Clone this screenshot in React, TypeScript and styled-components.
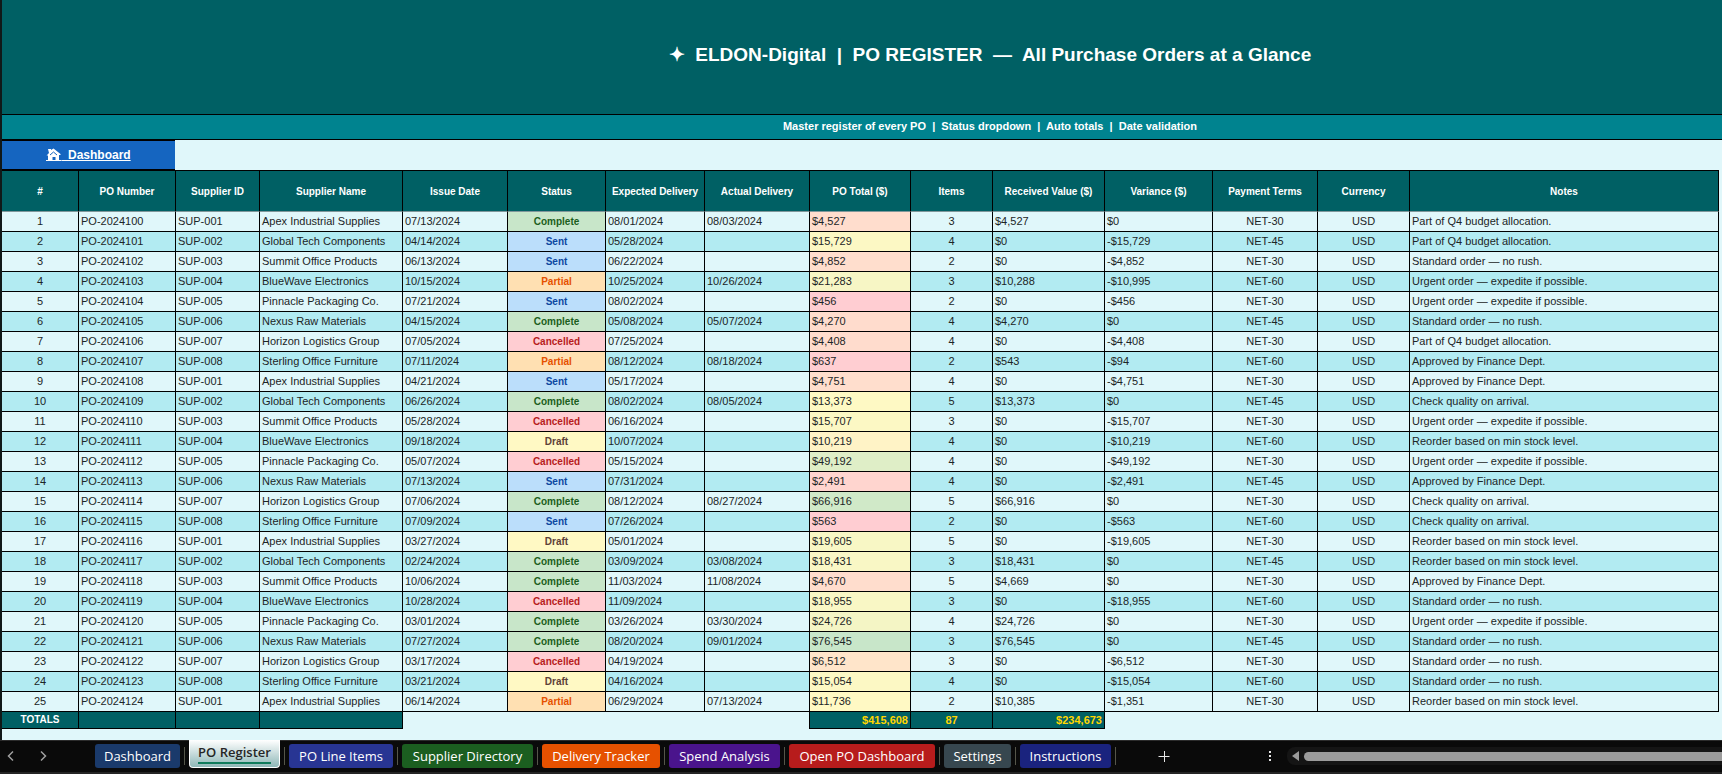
import React from "react";
import styled, { createGlobalStyle } from "styled-components";

const Global = createGlobalStyle`
  *, *::before, *::after { box-sizing: border-box; }
  body {
    margin: 0;
    background: #0a0a0a;
    font-family: "Liberation Sans", Arial, sans-serif;
  }
`;

const ink = "#000";
const teal = "#006064";

const Workbook = styled.div`
  display: flex;
  flex-direction: column;
  min-height: 100vh;
  overflow: hidden;
`;

const Sheet = styled.main`
  flex: 1;
  background: #e0f7fa;
  border-left: 2px solid #101818;
  overflow: hidden;
`;

const Banner = styled.header`
  background: ${teal};
  color: #fff;
  border-bottom: 1px solid ${ink};
  height: 115px;
  padding: 0 0 4px 256px;
  display: flex;
  align-items: center;
  justify-content: center;
`;

const Title = styled.h1`
  margin: 0;
  font-size: 19px;
  line-height: 24px;
  font-weight: 700;
  white-space: pre;
`;

const Subtitle = styled.p`
  margin: 0;
  background: #00838f;
  color: #fff;
  border-bottom: 1px solid ${ink};
  height: 25px;
  padding-left: 256px;
  font-size: 11px;
  line-height: 23px;
  font-weight: 700;
  text-align: center;
  white-space: pre;
`;

const LinkRow = styled.nav`
  display: flex;
  height: 31px;
  margin-right: 3px;
  border-bottom: 1px solid ${ink};
`;

const HomeLink = styled.a`
  width: 173px;
  background: #1565c0;
  border-top: 1px solid ${ink};
  border-bottom: 1px solid ${ink};
  color: #fff;
  display: flex;
  align-items: center;
  justify-content: center;
  font-size: 12px;
  font-weight: 700;
  white-space: pre;
`;

const Grid = styled.table`
  width: calc(100% - 3px);
  table-layout: fixed;
  border-collapse: separate;
  border-spacing: 0;
  font-size: 11px;
  color: #1c2526;
`;

const Col = styled.col<{ $w?: number }>`
  width: ${(p) => (p.$w ? `${p.$w}px` : "auto")};
`;

const Head = styled.th`
  height: 41px;
  padding: 0;
  background: ${teal};
  color: #fff;
  border-right: 1px solid ${ink};
  border-bottom: 1px solid #80979a;
  font-size: 10px;
  font-weight: 700;
  text-align: center;
  white-space: nowrap;
`;

const Row = styled.tr`
  background: #e0f7fa;
  &:nth-child(even) { background: #b2ebf2; }
`;

const Cell = styled.td<{ $align?: string; $fill?: string }>`
  height: 20px;
  padding: 0 2px;
  line-height: 19px;
  border-right: 1px solid ${ink};
  border-bottom: 1px solid ${ink};
  text-align: ${(p) => p.$align ?? "left"};
  background: ${(p) => p.$fill ?? "transparent"};
  white-space: nowrap;
`;

const StatusCell = styled(Cell)<{ $ink: string }>`
  color: ${(p) => p.$ink};
  font-size: 10px;
  font-weight: 700;
`;

const TotalCell = styled.td<{ $align?: string; $gold?: boolean }>`
  height: 17px;
  padding: 0 2px;
  line-height: 16px;
  background: ${teal};
  border-right: 1px solid ${ink};
  border-bottom: 1px solid ${ink};
  color: ${(p) => (p.$gold ? "#ffd600" : "#fff")};
  font-size: ${(p) => (p.$gold ? 11 : 10)}px;
  font-weight: 700;
  text-align: ${(p) => p.$align ?? "center"};
`;

const BlankCell = styled.td<{ $edge?: boolean }>`
  padding: 0;
  border-right: ${(p) => (p.$edge ? `1px solid ${ink}` : "0")};
`;

const TabBar = styled.footer`
  display: flex;
  align-items: flex-start;
  height: 34px;
  background: #0a0a0a;
  border-top: 1px solid #2c2c2c;
  font-family: "Open Sans", "Segoe UI", sans-serif;
  box-shadow: inset 0 -2px 0 #242424;
`;

const Arrows = styled.div`
  display: flex;
  flex: none;
  width: 95px;
  padding: 8px 0 0 3px;
  gap: 19px;
`;

const IconButton = styled.button`
  border: 0;
  padding: 0;
  height: 14px;
  width: 14px;
  background: none;
  color: #a0a0a0;
  flex: none;
  svg { display: block; }
`;

const TabList = styled.div`
  display: flex;
  flex: none;
`;

const TabSlot = styled.div`
  display: flex;
  &::after {
    content: "";
    width: 1px;
    height: 18px;
    margin: 6px 4px 0;
    background: #55564a;
  }
`;

const Tab = styled.button<{ $w: number; $color: string }>`
  width: ${(p) => p.$w}px;
  height: 24px;
  margin-top: 3px;
  padding: 0;
  border: 0;
  border-radius: 3px;
  background: ${(p) => p.$color};
  color: #fff;
  font: 400 13px/24px "Open Sans", "Segoe UI", sans-serif;
  white-space: nowrap;
`;

const ActiveTab = styled(Tab)`
  height: 28px;
  margin-top: -1px;
  padding-bottom: 3px;
  border: 1px solid #fff;
  border-top: 0;
  border-radius: 0 0 4px 4px;
  background: linear-gradient(#fff, #8fb8b8);
  color: #262626;
  font-weight: 600;
  span {
    display: block;
    width: fit-content;
    margin: 0 auto;
    height: 24px;
    line-height: 24px;
    border-bottom: 2px solid #0f7b5c;
  }
`;

const Tools = styled.div`
  display: flex;
  flex: 1;
  min-width: 0;
  padding: 8px 0 0 37px;
`;

const AddButton = styled(IconButton)`
  margin-right: 92px;
  color: #e6e6e6;
`;

const Track = styled.div`
  flex: 1;
  display: flex;
  align-items: center;
  height: 18px;
  margin: -2px 0 0 10px;
  padding-left: 4px;
  gap: 4px;
  border-radius: 8px 0 0 8px;
  background: #151515;
`;

const Thumb = styled.div`
  flex: 1;
  height: 9px;
  border-radius: 5px 0 0 5px;
  background: #9b9b9b;
`;

const columns: [string, number?][] = [
  ["#", 77],
  ["PO Number", 97],
  ["Supplier ID", 84],
  ["Supplier Name", 143],
  ["Issue Date", 105],
  ["Status", 98],
  ["Expected Delivery", 99],
  ["Actual Delivery", 105],
  ["PO Total ($)", 101],
  ["Items", 82],
  ["Received Value ($)", 112],
  ["Variance ($)", 108],
  ["Payment Terms", 105],
  ["Currency", 92],
  ["Notes"],
];

const suppliers = [
  "Apex Industrial Supplies",
  "Global Tech Components",
  "Summit Office Products",
  "BlueWave Electronics",
  "Pinnacle Packaging Co.",
  "Nexus Raw Materials",
  "Horizon Logistics Group",
  "Sterling Office Furniture",
];

const statusColors: Record<string, [string, string]> = {
  Complete: ["#c8e6c9", "#1b5e20"],
  Sent: ["#bbdefb", "#0d47a1"],
  Partial: ["#ffe0b2", "#e65100"],
  Cancelled: ["#ffcdd2", "#b71c1c"],
  Draft: ["#fff9c4", "#5d4037"],
};

const notes = {
  budget: "Part of Q4 budget allocation.",
  standard: "Standard order — no rush.",
  urgent: "Urgent order — expedite if possible.",
  finance: "Approved by Finance Dept.",
  quality: "Check quality on arrival.",
  reorder: "Reorder based on min stock level.",
};

type Order = [string, string, string, string, number, number, number, number, number, keyof typeof notes];

// issued, status, expected, actual, total, items, received, variance, net days, note
const orders: Order[] = [
  ["07/13", "Complete", "08/01", "08/03", 4527, 3, 4527, 0, 30, "budget"],
  ["04/14", "Sent", "05/28", "", 15729, 4, 0, -15729, 45, "budget"],
  ["06/13", "Sent", "06/22", "", 4852, 2, 0, -4852, 30, "standard"],
  ["10/15", "Partial", "10/25", "10/26", 21283, 3, 10288, -10995, 60, "urgent"],
  ["07/21", "Sent", "08/02", "", 456, 2, 0, -456, 30, "urgent"],
  ["04/15", "Complete", "05/08", "05/07", 4270, 4, 4270, 0, 45, "standard"],
  ["07/05", "Cancelled", "07/25", "", 4408, 4, 0, -4408, 30, "budget"],
  ["07/11", "Partial", "08/12", "08/18", 637, 2, 543, -94, 60, "finance"],
  ["04/21", "Sent", "05/17", "", 4751, 4, 0, -4751, 30, "finance"],
  ["06/26", "Complete", "08/02", "08/05", 13373, 5, 13373, 0, 45, "quality"],
  ["05/28", "Cancelled", "06/16", "", 15707, 3, 0, -15707, 30, "urgent"],
  ["09/18", "Draft", "10/07", "", 10219, 4, 0, -10219, 60, "reorder"],
  ["05/07", "Cancelled", "05/15", "", 49192, 4, 0, -49192, 30, "urgent"],
  ["07/13", "Sent", "07/31", "", 2491, 4, 0, -2491, 45, "finance"],
  ["07/06", "Complete", "08/12", "08/27", 66916, 5, 66916, 0, 30, "quality"],
  ["07/09", "Sent", "07/26", "", 563, 2, 0, -563, 60, "quality"],
  ["03/27", "Draft", "05/01", "", 19605, 5, 0, -19605, 30, "reorder"],
  ["02/24", "Complete", "03/09", "03/08", 18431, 3, 18431, 0, 45, "reorder"],
  ["10/06", "Complete", "11/03", "11/08", 4670, 5, 4669, 0, 30, "finance"],
  ["10/28", "Cancelled", "11/09", "", 18955, 3, 0, -18955, 60, "standard"],
  ["03/01", "Complete", "03/26", "03/30", 24726, 4, 24726, 0, 30, "urgent"],
  ["07/27", "Complete", "08/20", "09/01", 76545, 3, 76545, 0, 45, "standard"],
  ["03/17", "Cancelled", "04/19", "", 6512, 3, 0, -6512, 30, "standard"],
  ["03/21", "Draft", "04/16", "", 15054, 4, 0, -15054, 60, "standard"],
  ["06/14", "Partial", "06/29", "07/13", 11736, 2, 10385, -1351, 30, "reorder"],
];

const money = (n: number) => `${n < 0 ? "-" : ""}$${Math.abs(n).toLocaleString("en-US")}`;
const date = (d: string) => (d ? `${d}/2024` : "");

// Three-point colour scale: minimum red, median yellow, maximum green
const stops = { low: [255, 205, 210], mid: [255, 249, 196], high: [200, 230, 201] };
const scale = (n: number) => {
  const [lo, mid, hi] = [456, 11736, 76545];
  const [a, b, t] =
    n <= mid
      ? [stops.low, stops.mid, (n - lo) / (mid - lo)]
      : [stops.mid, stops.high, (n - mid) / (hi - mid)];
  return `rgb(${a.map((v, i) => Math.round(v + (b[i] - v) * t)).join(",")})`;
};

const tabs: [string, number, string][] = [
  ["Dashboard", 85, "#1a3a6b"],
  ["PO Register", 91, ""],
  ["PO Line Items", 104, "#283593"],
  ["Supplier Directory", 131, "#1b5e20"],
  ["Delivery Tracker", 118, "#e65100"],
  ["Spend Analysis", 111, "#4a148c"],
  ["Open PO Dashboard", 146, "#b71c1c"],
  ["Settings", 67, "#37474f"],
  ["Instructions", 91, "#1a237e"],
];

const HouseIcon = () => (
  <svg width="15" height="14" viewBox="0 0 15 14" aria-hidden="true">
    <path d="M2 1h3v1l2.500-1.500L14.500 6v1H13v5H9.500V9h-3v3H2V7.500H.5L3 5z" fill="#fff" />
    <path d="M4 7 7.500 4 11 7" stroke="#1565c0" fill="none" />
    <path d="M0 12.500h15" stroke="#fff" />
  </svg>
);

export default function App() {
  return (
    <Workbook>
      <Global />
      <Sheet>
        <Banner>
          <Title>{"✦  ELDON-Digital  |  PO REGISTER  —  All Purchase Orders at a Glance"}</Title>
        </Banner>
        <Subtitle>{"Master register of every PO  |  Status dropdown  |  Auto totals  |  Date validation"}</Subtitle>
        <LinkRow>
          <HomeLink href="#dashboard">
            <HouseIcon />
            <span>{"  Dashboard"}</span>
          </HomeLink>
        </LinkRow>
        <Grid>
          <colgroup>
            {columns.map(([name, w]) => (
              <Col key={name} $w={w} />
            ))}
          </colgroup>
          <thead>
            <tr>
              {columns.map(([name]) => (
                <Head key={name} scope="col">{name}</Head>
              ))}
            </tr>
          </thead>
          <tbody>
            {orders.map(([issued, status, expected, actual, total, items, received, variance, net, note], i) => (
              <Row key={i}>
                <Cell $align="center">{i + 1}</Cell>
                <Cell>{`PO-${2024100 + i}`}</Cell>
                <Cell>{`SUP-00${(i % 8) + 1}`}</Cell>
                <Cell>{suppliers[i % 8]}</Cell>
                <Cell>{date(issued)}</Cell>
                <StatusCell $align="center" $fill={statusColors[status][0]} $ink={statusColors[status][1]}>{status}</StatusCell>
                <Cell>{date(expected)}</Cell>
                <Cell>{date(actual)}</Cell>
                <Cell $fill={scale(total)}>{money(total)}</Cell>
                <Cell $align="center">{items}</Cell>
                <Cell>{money(received)}</Cell>
                <Cell>{money(variance)}</Cell>
                <Cell $align="center">{`NET-${net}`}</Cell>
                <Cell $align="center">USD</Cell>
                <Cell>{notes[note]}</Cell>
              </Row>
            ))}
          </tbody>
          <tfoot>
            <tr>
              <TotalCell>TOTALS</TotalCell>
              <TotalCell />
              <TotalCell />
              <TotalCell />
              <BlankCell colSpan={4} $edge />
              <TotalCell $gold $align="right">$415,608</TotalCell>
              <TotalCell $gold>87</TotalCell>
              <TotalCell $gold $align="right">$234,673</TotalCell>
              <BlankCell colSpan={4} />
            </tr>
          </tfoot>
        </Grid>
      </Sheet>
      <TabBar>
        <Arrows>
          <IconButton aria-label="Previous sheet">
            <svg width="14" height="14" fill="none" stroke="currentColor" strokeWidth="1.500"><path d="M10 2.500 5.500 7l4.500 4.500" /></svg>
          </IconButton>
          <IconButton aria-label="Next sheet">
            <svg width="14" height="14" fill="none" stroke="currentColor" strokeWidth="1.500"><path d="M5 2.500 9.500 7 5 11.500" /></svg>
          </IconButton>
        </Arrows>
        <TabList>
          {tabs.map(([name, w, color]) => (
            <TabSlot key={name}>
              {color ? (
                <Tab $w={w} $color={color}>{name}</Tab>
              ) : (
                <ActiveTab $w={w} $color="#fff"><span>{name}</span></ActiveTab>
              )}
            </TabSlot>
          ))}
        </TabList>
        <Tools>
          <AddButton aria-label="New sheet">
            <svg width="14" height="14" stroke="currentColor"><path d="M1.500 7.500h11M7.500 2v11" /></svg>
          </AddButton>
          <IconButton aria-label="Resize tab bar">
            <svg width="14" height="14" fill="#e6e6e6"><path d="M6 2h2v2H6zM6 6h2v2H6zM6 10h2v2H6z" /></svg>
          </IconButton>
          <Track>
            <svg width="9" height="10" fill="#9b9b9b"><path d="M8 0v10L1 5z" /></svg>
            <Thumb />
          </Track>
        </Tools>
      </TabBar>
    </Workbook>
  );
}
